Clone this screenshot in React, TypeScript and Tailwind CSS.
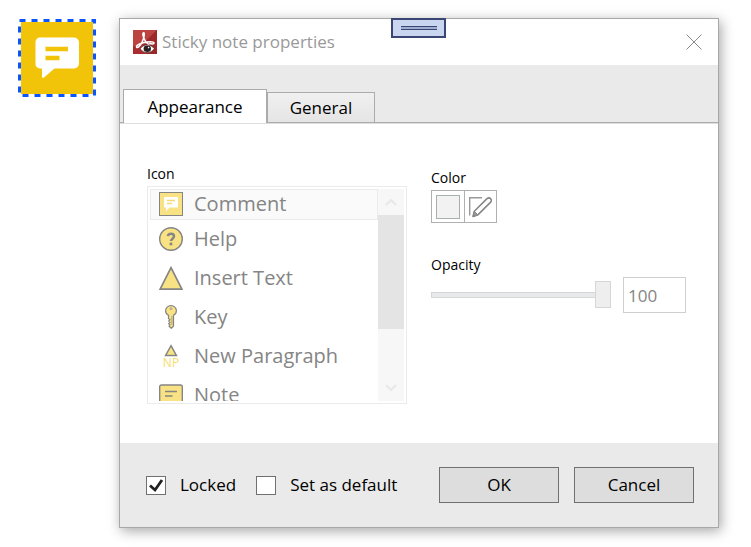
import { useState } from "react";
import type { ReactNode } from "react";

function CommentIcon() {
  return (
    <svg viewBox="0 0 24 24" className="size-6 shrink-0" aria-hidden="true">
      <rect x="0.5" y="0.5" width="23" height="23" fill="#f9e284" stroke="#858585" />
      <path
        fill="#fff"
        d="M6 5h12a1 1 0 0 1 1 1v8.500a1 1 0 0 1-1 1h-7.500L7 19v-3.500H6a1 1 0 0 1-1-1V6a1 1 0 0 1 1-1z"
      />
      <path d="M8 8.500h8M8 11.500h5" stroke="#f5dc74" strokeWidth="1.400" />
    </svg>
  );
}

function HelpIcon() {
  return (
    <svg viewBox="0 0 24 24" className="size-6 shrink-0" aria-hidden="true">
      <circle cx="12" cy="12" r="11.300" fill="#f9e284" stroke="#858585" strokeWidth="1.400" />
      <path
        d="M8.900 9.200C9.100 7.500 10.300 6.800 11.900 6.800c1.900 0 3.100.9 3.100 2.500 0 2.400-3 2.300-3 4.800"
        fill="none"
        stroke="#858585"
        strokeWidth="2.500"
      />
      <rect x="10.600" y="15.600" width="2.700" height="2.700" fill="#858585" />
    </svg>
  );
}

function InsertTextIcon() {
  return (
    <svg viewBox="0 0 24 24" className="size-6 shrink-0" aria-hidden="true">
      <path d="M12 1.700L22.900 23.200H1.100z" fill="#f9e284" stroke="#858585" strokeWidth="1.700" />
    </svg>
  );
}

function KeyIcon() {
  return (
    <svg viewBox="0 0 24 24" className="size-6 shrink-0" aria-hidden="true">
      <path
        d="M12 .7c3 0 5.400 2.200 5.400 5 0 2-1.100 3.700-2.900 4.500v11L12.200 23.300 10 21.200l1-1.200-1.300-1.300 1.300-1.300-1.300-1.300 1.300-1.300-1.500-1.400V10.200C7.700 9.400 6.600 7.700 6.600 5.700c0-2.800 2.400-5 5.400-5z"
        fill="#f9e284"
        stroke="#858585"
        strokeWidth="1.200"
      />
      <circle cx="12" cy="3.700" r="0.900" fill="#fff" stroke="#858585" strokeWidth="0.800" />
      <path d="M12.900 11v9" stroke="#a59a74" strokeWidth="0.900" />
    </svg>
  );
}

function NewParagraphIcon() {
  return (
    <svg viewBox="0 0 24 24" className="size-6 shrink-0 overflow-visible" aria-hidden="true">
      <path d="M12 1.700L17.400 11.400H6.600z" fill="#f9e284" stroke="#858585" strokeWidth="1.500" />
      <text
        x="12"
        y="23"
        textAnchor="middle"
        fill="#f7dc6c"
        fontSize="12"
        fontFamily="'Open Sans', sans-serif"
      >
        NP
      </text>
    </svg>
  );
}

function NoteIcon() {
  return (
    <svg viewBox="0 0 24 24" className="size-6 shrink-0" aria-hidden="true">
      <path
        d="M2.500 2h19a1.800 1.800 0 0 1 1.800 1.800V18a1.800 1.800 0 0 1-1.800 1.800H13L9 23v-3.200H2.500A1.800 1.800 0 0 1 .7 18V3.800A1.800 1.800 0 0 1 2.500 2z"
        fill="#f9e284"
        stroke="#858585"
        strokeWidth="1.400"
      />
      <path d="M6 8.500h12M6 13h7.500" stroke="#858585" strokeWidth="1.300" />
    </svg>
  );
}

function AppLogo() {
  return (
    <svg viewBox="0 0 24 24" className="size-6" aria-hidden="true">
      <rect width="24" height="24" fill="#a92d2e" />
      <path d="M0 0h24L8 16H0z" fill="#bd4341" />
      <path d="M24 0v24H14L10 14z" fill="#9c2829" />
      <path
        d="M10.500 2.600c-1.500.5-.3 3.500.3 5.200 1 3 3 5.700 5.500 7M10.500 2.600c1.700.3.500 5.500-1.300 9.200-1.700 3.300-4.200 6.500-5.500 5.500-1.200-1.500 2.300-3.700 6.500-4.600 4.500-.9 10.300-1.400 10.800.3.200 1.300-2.500 1.300-4.700.3"
        fill="none"
        stroke="#fff"
        strokeWidth="1.500"
      />
      <path
        d="M7.300 18.700c3-5 10.500-5 14 0-3.500 5.200-11 5.200-14 0z"
        fill="#fff"
        stroke="#3a1a1a"
        strokeWidth="0.600"
      />
      <ellipse cx="14.300" cy="18.700" rx="3.700" ry="3.300" fill="#2a2022" />
      <circle cx="15.600" cy="17.600" r="0.800" fill="#fff" />
    </svg>
  );
}

function StickyNote() {
  return (
    <svg viewBox="0 0 78 78" className="mt-px size-[78px] shrink-0" role="img" aria-label="Sticky note">
      <rect
        x="1.500"
        y="1.500"
        width="75"
        height="75"
        fill="none"
        stroke="#0a55ff"
        strokeWidth="3"
        strokeDasharray="6 6"
      />
      <rect x="3" y="3" width="72" height="72" fill="#f1c40a" />
      <path
        d="M22 18.500h34a5 5 0 0 1 5 5v21a5 5 0 0 1-5 5H36.500L26 58.500q-2 1.200-2-1v-8h-2a4.500 4.500 0 0 1-4.500-5v-21a4.500 4.500 0 0 1 4.500-5z"
        fill="#fff"
      />
      <path d="M27.500 30H50M27.500 39h14" stroke="#f1c40a" strokeWidth="4.500" />
    </svg>
  );
}

const icons: { name: string; icon: ReactNode }[] = [
  { name: "Comment", icon: <CommentIcon /> },
  { name: "Help", icon: <HelpIcon /> },
  { name: "Insert Text", icon: <InsertTextIcon /> },
  { name: "Key", icon: <KeyIcon /> },
  { name: "New Paragraph", icon: <NewParagraphIcon /> },
  { name: "Note", icon: <NoteIcon /> },
];

function IconList() {
  return (
    <div className="flex h-[218px] border border-[#ebebeb] p-0.5">
      <ul
        role="listbox"
        aria-labelledby="icon-label"
        aria-disabled="true"
        className="min-w-0 flex-1 overflow-hidden text-xl text-[#858585]"
      >
        {icons.map(({ name, icon }, i) => (
          <li
            key={name}
            role="option"
            aria-selected={i === 0}
            className={
              i === 0
                ? "flex h-[31px] items-center gap-[11px] border border-[#ebebeb] bg-[#fafafa] px-2 pb-0.5 leading-6"
                : "flex h-[39px] items-center gap-[11px] px-[9px] pb-0.5 leading-6"
            }
          >
            {icon}
            <span>{name}</span>
          </li>
        ))}
      </ul>
      <div className="flex w-[26px] flex-col bg-[#f7f7f7]" aria-hidden="true">
        <div className="grid h-[26px] place-items-center">
          <svg viewBox="0 0 12 8" className="h-2 w-3">
            <path d="M1 7l5-5 5 5" fill="none" stroke="#e8e8e8" strokeWidth="2" />
          </svg>
        </div>
        <div className="h-[114px] bg-[#e4e4e4]" />
        <div className="mt-auto grid h-[26px] place-items-center">
          <svg viewBox="0 0 12 8" className="h-2 w-3">
            <path d="M1 1l5 5 5-5" fill="none" stroke="#e8e8e8" strokeWidth="2" />
          </svg>
        </div>
      </div>
    </div>
  );
}

function CheckOption({ label, initial }: { label: string; initial: boolean }) {
  const [checked, setChecked] = useState(initial);
  return (
    <label className="flex items-center gap-[14px] whitespace-nowrap">
      <span className="grid">
        <input
          type="checkbox"
          checked={checked}
          onChange={(e) => setChecked(e.target.checked)}
          className="col-start-1 row-start-1 h-[19px] w-5 appearance-none border border-[#707070] bg-white"
        />
        {checked && (
          <svg viewBox="0 0 20 19" className="pointer-events-none col-start-1 row-start-1 h-[19px] w-5" aria-hidden="true">
            <path d="M4 9.500l5 4.500 7-10" fill="none" stroke="#212121" strokeWidth="2.800" />
          </svg>
        )}
      </span>
      {label}
    </label>
  );
}

export default function App() {
  return (
    <main className="flex items-start gap-[23px] bg-white pt-[18px] pr-8 pb-5 pl-[18px] font-['Open_Sans','Noto_Sans',sans-serif] text-[17px] leading-6 text-black">
      <StickyNote />
      <section
        role="dialog"
        aria-labelledby="dialog-title"
        className="relative min-w-0 flex-1 border border-[#a8a8a8] bg-white shadow-[2px_3px_12px_rgba(0,0,0,0.35)]"
      >
        <div
          aria-hidden="true"
          className="absolute -top-px left-[271px] grid h-5 w-[55px] place-items-center border-2 border-[#3b4674] bg-[#cad5f0]"
        >
          <div className="h-1 w-9 border-y border-[#3b4674] bg-[#a2aed0]" />
        </div>

        <header className="flex h-[46px] items-center gap-[5px] pr-4 pl-[13px]">
          <AppLogo />
          <h1 id="dialog-title" className="flex-1 text-[#999999]">
            Sticky note properties
          </h1>
          <button type="button" aria-label="Close">
            <svg viewBox="0 0 16 16" className="size-4" aria-hidden="true">
              <path d="M.5 .5l15 15M15.500 .5l-15 15" stroke="#8a8a8a" strokeWidth="1" />
            </svg>
          </button>
        </header>

        <div role="tablist" className="flex h-[58px] items-end border-b border-[#ababab] bg-[#eaeaea] pl-[3px]">
          <button
            type="button"
            role="tab"
            aria-selected="true"
            className="-mb-px h-[34px] w-36 border border-b-0 border-[#ababab] bg-white"
          >
            Appearance
          </button>
          <button
            type="button"
            role="tab"
            aria-selected="false"
            className="h-[30px] w-[108px] border border-b-0 border-[#ababab] bg-linear-to-b from-[#f0f0f0] to-[#e5e5e5]"
          >
            General
          </button>
        </div>

        <div className="flex items-start gap-6 border-t border-[#dedede] pt-10 pr-8 pb-[39px] pl-[27px]">
          <div className="flex w-[260px] flex-col gap-0.5">
            <span id="icon-label" className="text-sm leading-5">
              Icon
            </span>
            <IconList />
          </div>

          <div className="min-w-0 flex-1 pt-1 text-sm leading-5">
            <div id="color-label">Color</div>
            <div
              role="group"
              aria-labelledby="color-label"
              className="mt-0.5 flex h-[33px] w-[66px] divide-x divide-[#b0b0b0] border border-[#b0b0b0]"
            >
              <button type="button" aria-label="Current color" disabled className="grid flex-1 place-items-center">
                <span className="size-6 border border-[#a9b0b0] bg-[#f2f2f2]" />
              </button>
              <button type="button" aria-label="Edit color" disabled className="grid flex-1 place-items-center">
                <svg viewBox="0 0 24 24" className="size-6" aria-hidden="true">
                  <path d="M1.700 20.500V2.700H14" fill="none" stroke="#999" strokeWidth="1.400" />
                  <path
                    d="M5 21.500l1.300-5.200L19 3.600c2.500-2 5.600 1 3.700 3.500L9.900 19.900z"
                    fill="none"
                    stroke="#858585"
                    strokeWidth="1.500"
                    strokeLinejoin="round"
                  />
                  <path d="M6.300 16.300l3.600 3.600L5 21.500z" fill="#999" stroke="#858585" />
                </svg>
              </button>
            </div>

            <label htmlFor="opacity" className="mt-8 block">
              Opacity
            </label>
            <div className="mt-0.5 flex items-center gap-3">
              <input
                id="opacity"
                type="range"
                min={0}
                max={100}
                defaultValue={100}
                disabled
                className="h-[27px] min-w-0 flex-1 appearance-none bg-transparent [&::-webkit-slider-runnable-track]:h-1.5 [&::-webkit-slider-runnable-track]:bg-[#e7eaea] [&::-webkit-slider-runnable-track]:shadow-[inset_0_0_0_1px_#d6d8d8] [&::-webkit-slider-thumb]:-mt-[11px] [&::-webkit-slider-thumb]:h-[27px] [&::-webkit-slider-thumb]:w-4 [&::-webkit-slider-thumb]:appearance-none [&::-webkit-slider-thumb]:border [&::-webkit-slider-thumb]:border-[#d6d6d6] [&::-webkit-slider-thumb]:bg-[#eeeeee]"
              />
              <input
                type="text"
                aria-label="Opacity value"
                defaultValue="100"
                disabled
                className="h-9 w-[63px] border border-[#cfcfcf] bg-white px-1 text-[17px] text-[#858585]"
              />
            </div>
          </div>
        </div>

        <footer className="flex items-center gap-5 bg-[#eaeaea] py-6 pr-6 pl-[26px]">
          <CheckOption label="Locked" initial={true} />
          <CheckOption label="Set as default" initial={false} />
          <div className="ml-auto flex gap-[15px]">
            <button type="button" className="h-9 w-[120px] border border-[#707070] bg-[#dddddd]">
              OK
            </button>
            <button type="button" className="h-9 w-[120px] border border-[#707070] bg-[#dddddd]">
              Cancel
            </button>
          </div>
        </footer>
      </section>
    </main>
  );
}
